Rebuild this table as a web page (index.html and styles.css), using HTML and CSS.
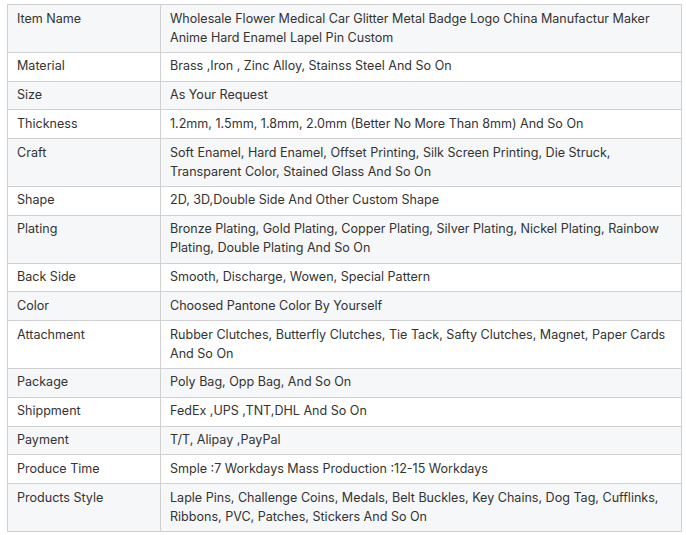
FILE: index.html
```html
<!DOCTYPE html>
<html lang="en">
<head>
    <meta charset="UTF-8">
    <meta name="viewport" content="width=device-width, initial-scale=1.0">
    <title>Product Specification</title>
    <link rel="stylesheet" href="styles.css">
</head>
<body>

    <!-- Spec Table -->
    <table class="spec-table">
        <tbody>
            <tr><td>Item Name</td><td>Wholesale Flower Medical Car Glitter Metal Badge Logo China Manufactur Maker Anime Hard Enamel Lapel Pin Custom</td></tr>
            <tr><td>Material</td><td>Brass ,Iron , Zinc Alloy, Stainss Steel And So On</td></tr>
            <tr><td>Size</td><td>As Your Request</td></tr>
            <tr><td>Thickness</td><td>1.2mm, 1.5mm, 1.8mm, 2.0mm (Better No More Than 8mm) And So On</td></tr>
            <tr><td>Craft</td><td>Soft Enamel, Hard Enamel, Offset Printing, Silk Screen Printing, Die Struck, Transparent Color, Stained Glass And So On</td></tr>
            <tr><td>Shape</td><td>2D, 3D,Double Side And Other Custom Shape</td></tr>
            <tr><td>Plating</td><td>Bronze Plating, Gold Plating, Copper Plating, Silver Plating, Nickel Plating, Rainbow Plating, Double Plating And So On</td></tr>
            <tr><td>Back Side</td><td>Smooth, Discharge, Wowen, Special Pattern</td></tr>
            <tr><td>Color</td><td>Choosed Pantone Color By Yourself</td></tr>
            <tr><td>Attachment</td><td>Rubber Clutches, Butterfly Clutches, Tie Tack, Safty Clutches, Magnet, Paper Cards And So On</td></tr>
            <tr><td>Package</td><td>Poly Bag, Opp Bag, And So On</td></tr>
            <tr><td>Shippment</td><td>FedEx ,UPS ,TNT,DHL And So On</td></tr>
            <tr><td>Payment</td><td>T/T, Alipay ,PayPal</td></tr>
            <tr><td>Produce Time</td><td>Smple :7 Workdays Mass Production :12-15 Workdays</td></tr>
            <tr><td>Products Style</td><td>Laple Pins, Challenge Coins, Medals, Belt Buckles, Key Chains, Dog Tag, Cufflinks, Ribbons, PVC, Patches, Stickers And So On</td></tr>
        </tbody>
    </table>

</body>
</html>
```

FILE: styles.css
```css
body {
    margin: 0;
    padding: 4px 4px 0 7px;
    background-color: white;
    font-family: Inter, "Noto Sans", sans-serif;
    font-size: 12.55px;
    color: #333;
}
.spec-table {
    width: 675px;
    border-collapse: collapse;
    border: 1px solid #d0d0d0;
}
.spec-table td {
    border: 1px solid #d0d0d0;
    padding: 3.5px 10px 5.3px 9px;
    line-height: 19px;
    vertical-align: top;
    text-align: left;
}
.spec-table td:first-child {
    width: 133px;
}
.spec-table tr:nth-child(odd) {
    background-color: #f6f7f8;
}
.spec-table tr:nth-child(even) {
    background-color: white;
}
```
